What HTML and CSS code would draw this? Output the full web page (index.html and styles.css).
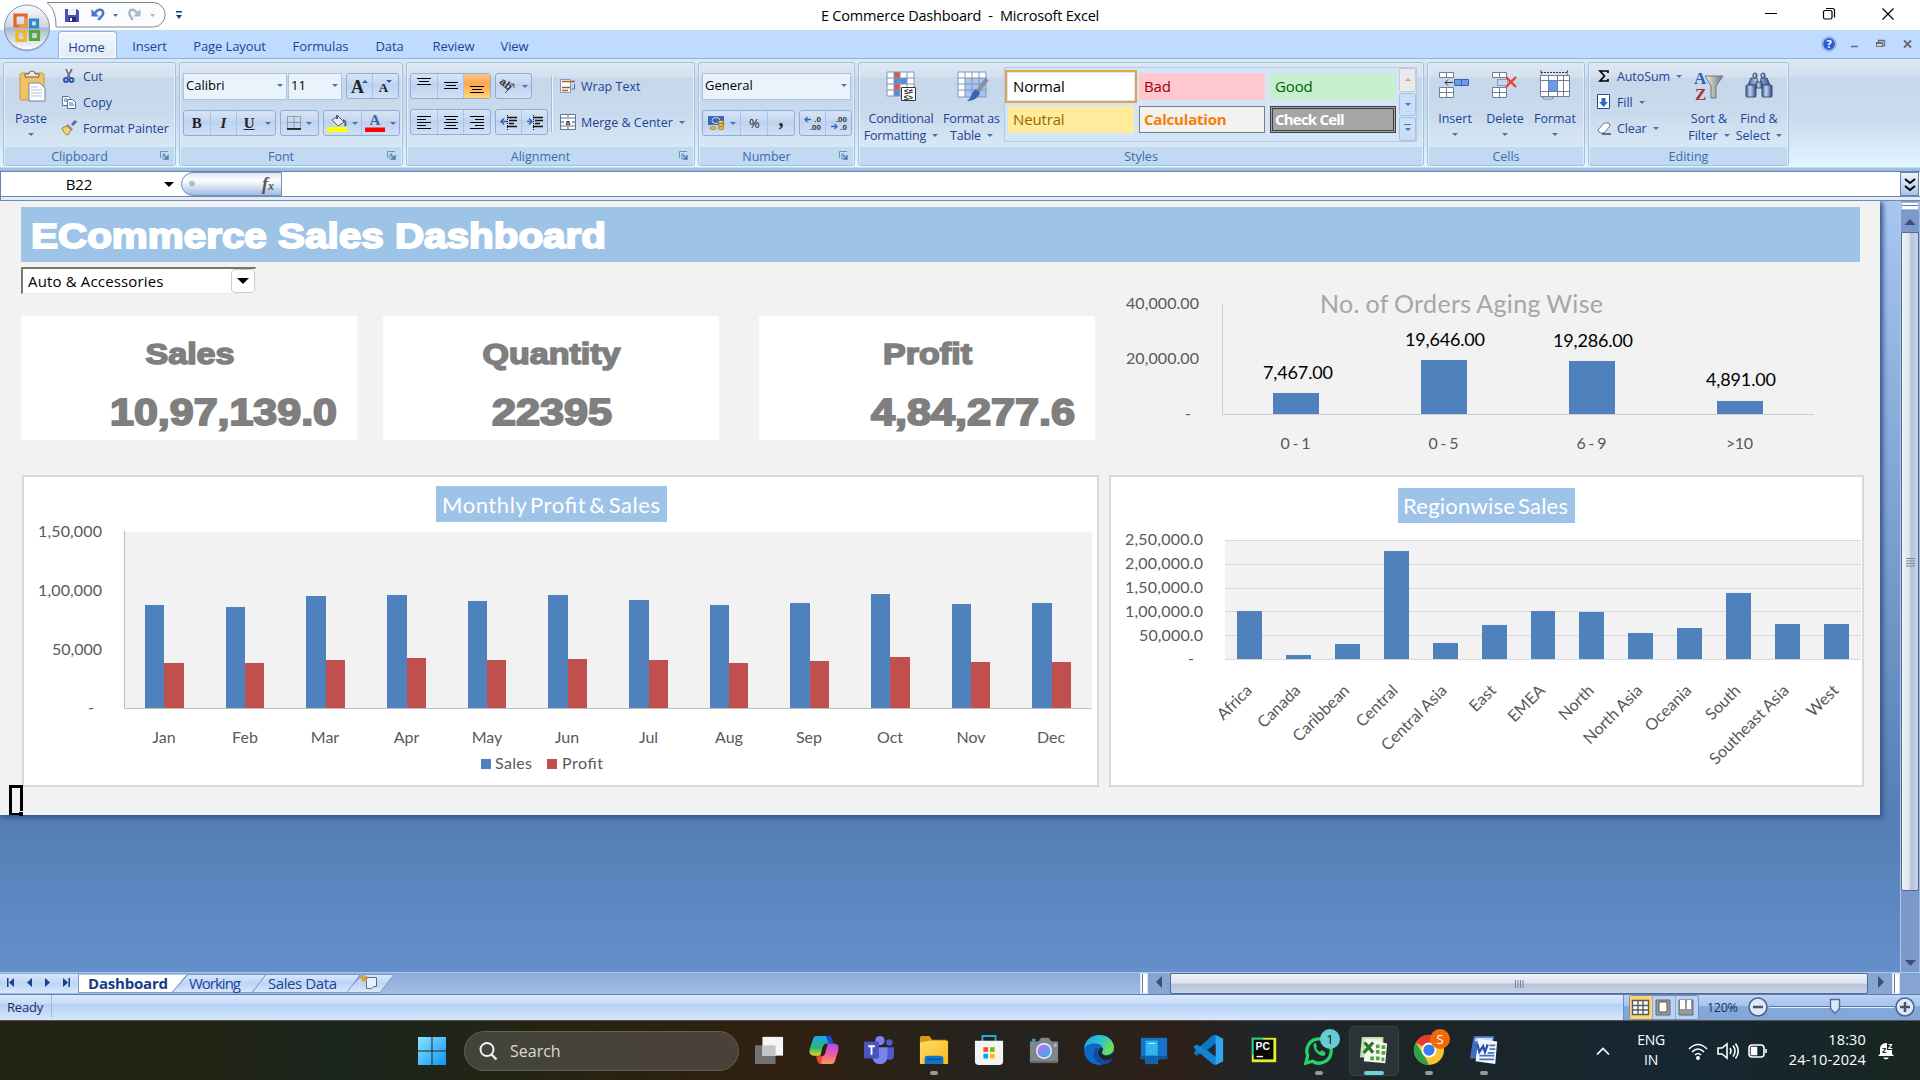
FILE: index.html
```html
<!DOCTYPE html>
<html lang="en">
<head>
<meta charset="utf-8">
<title>E Commerce Dashboard - Microsoft Excel</title>
<link rel="stylesheet" href="styles.css">
</head>
<body>
<svg class="defs" width="0" height="0">
  <defs>
    <linearGradient id="orb" x1="0" y1="0" x2="0" y2="1"><stop offset="0" stop-color="#fbfcfd"/><stop offset=".48" stop-color="#cdd6e2"/><stop offset=".52" stop-color="#a9b9cf"/><stop offset="1" stop-color="#fff"/></linearGradient>
    <linearGradient id="win" x1="0" y1="0" x2="1" y2="1"><stop offset="0" stop-color="#8ce3ff"/><stop offset="1" stop-color="#0a94f8"/></linearGradient>
    <linearGradient id="folder" x1="0" y1="0" x2="1" y2="1"><stop offset="0" stop-color="#ffdb6b"/><stop offset="1" stop-color="#fbbb18"/></linearGradient>
    <linearGradient id="copA" x1="0" y1="0" x2="0" y2="1"><stop offset="0" stop-color="#1aa5f5"/><stop offset=".6" stop-color="#2bb673"/><stop offset="1" stop-color="#e9d51c"/></linearGradient>
    <linearGradient id="copB" x1="0" y1="0" x2="0" y2="1"><stop offset="0" stop-color="#a24df0"/><stop offset=".6" stop-color="#f2609b"/><stop offset="1" stop-color="#fb9b4b"/></linearGradient>
    <linearGradient id="edgeA" x1="0" y1="0" x2="1" y2=".5"><stop offset="0" stop-color="#1b9de2"/><stop offset=".6" stop-color="#33c5c9"/><stop offset="1" stop-color="#6ee04f"/></linearGradient>
    <linearGradient id="metal" x1="0" y1="0" x2="1" y2="0"><stop offset="0" stop-color="#eee"/><stop offset="1" stop-color="#777"/></linearGradient>
    <linearGradient id="barrel" x1="0" y1="0" x2="1" y2="0"><stop offset="0" stop-color="#34598f"/><stop offset=".4" stop-color="#c6d7ee"/><stop offset="1" stop-color="#2b4b80"/></linearGradient>
    <linearGradient id="lens" x1="0" y1="0" x2="1" y2="1"><stop offset="0" stop-color="#c66af0"/><stop offset="1" stop-color="#28b5f0"/></linearGradient>
    <symbol id="launch" viewBox="0 0 10 9"><path d="M.5 7V.5H8M3 8.500V3h2" fill="none" stroke="#6b93bd"/><path d="M4 4l4 4M8 4v4H4" stroke="#4a77a8" fill="none" stroke-width="1.400"/></symbol>
    <symbol id="minus" viewBox="0 0 22 22"><circle cx="11" cy="11" r="9" fill="#dfe9f7" stroke="#44628f" stroke-width="1.500"/><path d="M6 11h10" stroke="#46566e" stroke-width="2.500"/></symbol>
    <symbol id="plus" viewBox="0 0 22 22"><circle cx="11" cy="11" r="9" fill="#dfe9f7" stroke="#44628f" stroke-width="1.500"/><path d="M6 11h10M11 6v10" stroke="#46566e" stroke-width="2.500"/></symbol>
  </defs>
</svg>

<header class="titlebar">
  <svg class="quick" width="190" height="30" viewBox="0 0 190 30">
    <path d="M47 2.500c6 5 9 12 9 24.500H154a12.300 12.300 0 0 0 0-24.500Z" fill="#fbfcfe" stroke="#84878c"/>
    <g><path d="M65 9h12l2 2v11H65z" fill="#4a50b8"/><path d="M68 9h8v6h-8z" fill="#eef3fb"/><path d="M69 17h7v5h-7z" fill="#26306c"/><path d="M70 18h2v3h-2z" fill="#fff"/></g>
    <path d="M91.500 9v7.500h7.500z" fill="#4779d1"/><path d="M95 13c3-5 9-4 8 1-.5 2.500-3 3-4.500 6" fill="none" stroke="#4779d1" stroke-width="2.600"/>
    <path d="M140.500 9v7.500H133z" fill="#a9b9cd"/><path d="M137 13c-3-5-8-4-7.500 1 .5 2.500 2 3 3 6" fill="none" stroke="#a9b9cd" stroke-width="2.600"/>
    <path d="M113 14h5l-2.500 3z" fill="#4472b0"/><path d="M150 14h5l-2.500 3z" fill="#b5b5b5"/>
    <path d="M176 11h6v1.500h-6zM176 15h6l-3 4z" fill="#1b3f82"/>
  </svg>
  <h1>E Commerce Dashboard&nbsp; -&nbsp; Microsoft Excel</h1>
  <svg class="winbtns" width="160" height="30" viewBox="1760 0 160 30" fill="none" stroke="#000" stroke-width="1.200"><path d="M1765 13.500h12M1882.500 8.500l11 11M1893.500 8.500l-11 11"/><rect x="1823.500" y="10.500" width="8.500" height="8.500" rx="1.500"/><path d="M1826 8.500h6.500a2 2 0 0 1 2 2v7"/></svg>
</header>

<nav class="tabs">
  <a class="tab home">Home</a><a class="tab t64">Insert</a><a class="tab t96">Page Layout</a><a class="tab t86">Formulas</a><a class="tab t52">Data</a><a class="tab t76">Review</a><a class="tab t46">View</a>
  <svg class="mdibtns" width="100" height="28" viewBox="1820 30 100 28"><circle cx="1829" cy="44" r="6.500" fill="#2a62d6" stroke="#fff"/><circle cx="1829" cy="44" r="7" fill="none" stroke="#6d97dc"/><text x="1829" y="48" text-anchor="middle" class="help">?</text><path d="M1851 46.500h7M1882.500 45.500h2v-5h-6v2" stroke="#6d6d6d" stroke-width="1.300" fill="none"/><path d="M1876.500 42.500h6v4h-6z" stroke="#6d6d6d" fill="none"/><path d="M1876 43h7" stroke="#6d6d6d" stroke-width="2"/><path d="M1904 40.500l7 7M1911 40.500l-7 7" stroke="#6d6d6d" stroke-width="2"/></svg>
</nav>

<svg class="office" width="54" height="54" viewBox="0 0 54 54"><circle cx="27" cy="28.500" r="23" fill="#8797ac" opacity=".5"/><circle cx="27" cy="27.500" r="22.500" fill="url(#orb)" stroke="#8796ac"/><g fill="none" stroke-width="3.200"><path d="M15 26V15h11v11z" stroke="#e4622b"/><path d="M26 18v8h-7" stroke="#f39a3a"/><path d="M30.500 20h7v7h-7z" stroke="#2f87ca"/><path d="M17 31.500h8v9h-8z" stroke="#f5b51d"/><path d="M30.500 31.500h8v8h-8z" stroke="#58a53c"/></g></svg>

<section class="ribbon">
  <div class="group g-clip">
    <div class="body">
      <div class="big w50"><svg width="30" height="32" viewBox="0 0 30 32"><rect x="3" y="3" width="24" height="27" rx="2" fill="#f3c065" stroke="#c99a45"/><path d="M8 7V4h4a3 3 0 0 1 6 0h4v3z" fill="#e8e8e8" stroke="#666"/><path d="M12 13h11l5 5v13H12z" fill="#fff" stroke="#6b86ae"/><path d="M14 17h7M14 20h11M14 23h11M14 26h11" stroke="#b4c3da"/></svg><span>Paste</span><i class="dd"></i></div>
      <div class="list">
        <div><svg width="16" height="16" viewBox="0 0 16 16"><path d="M5 1l4 9M11 1L6 10" stroke="#5f6b7c" stroke-width="1.600"/><g fill="none" stroke="#2f5aa8" stroke-width="2"><circle cx="5" cy="12" r="2"/><circle cx="10.500" cy="12" r="2"/></g></svg>Cut</div>
        <div><svg width="16" height="16" viewBox="0 0 16 16" fill="#fff" stroke="#4a69a8"><path d="M1.500 2.500h6l2 2v7h-8z"/><path d="M6.500 5.500h5l3 3v6h-8z"/><path d="M3 5h3M3 7h3M8 9h4M8 11h5"/></svg>Copy</div>
        <div><svg width="16" height="16" viewBox="0 0 16 16"><path d="M11 5l4-4" stroke="#5d6aa8" stroke-width="3"/><path d="M7 4l5 5-2 2-5-5z" fill="#8c96a8"/><path d="M1 8l5-2 4 4-3 5c-3-1-5-3-6-7z" fill="#f1d37a" stroke="#a5813b"/></svg>Format Painter</div>
      </div>
    </div>
    <footer class="with-launch">Clipboard<svg class="lnch"><use href="#launch"/></svg></footer>
  </div>

  <div class="group g-font">
    <div class="body col">
      <div class="row"><div class="combo c104">Calibri<i class="dd"></i></div><div class="combo c54">11<i class="dd"></i></div>
        <div class="btns w52 ml4"><b class="serif s20a">A<i class="dd up blue"></i></b><b class="serif s16a">A<i class="dd blue"></i></b></div></div>
      <div class="row"><div class="btns w92"><b class="serif">B</b><b class="serif"><em>I</em></b><b class="serif under"><u>U</u><i class="dd"></i></b></div>
        <div class="btns w39"><b><svg width="14" height="14" viewBox="0 0 14 14"><path d="M.5.500h13v12H.5zM7 .5v12M.5 6.500h13" fill="none" stroke="#5c6672" stroke-dasharray="1 1"/><path d="M0 13h14" stroke="#000" stroke-width="1.500"/></svg><i class="dd"></i></b></div>
        <div class="btns w76"><b><svg width="20" height="18" viewBox="0 0 20 18"><path d="M5 6l6-4 6 6-6 4z" fill="#e8ecf2" stroke="#525d6d"/><path d="M10 5V1M16 6c3 1 3 4 2 6" stroke="#40689f" fill="none" stroke-width="2"/><path d="M0 13h20v5H0z" fill="#ff0"/></svg><i class="dd"></i></b><b><svg width="20" height="18" viewBox="0 0 20 18"><text x="10" y="11" text-anchor="middle" class="fontA">A</text><path d="M0 13.500h20v4.500H0z" fill="#f00"/></svg><i class="dd"></i></b></div></div>
    </div>
    <footer class="with-launch">Font<svg class="lnch"><use href="#launch"/></svg></footer>
  </div>

  <div class="group g-align">
    <div class="body">
      <div class="col al">
        <div class="row"><div class="btns w80"><b><svg width="16" height="20"><path d="M1 2.500h14M3 5.500h10M1 8.500h14" stroke="#000" stroke-width="1.200"/></svg></b><b><svg width="16" height="20"><path d="M1 6.500h14M3 9.500h10M1 12.500h14" stroke="#000" stroke-width="1.200"/></svg></b><b class="on"><svg width="16" height="20"><path d="M1 10.500h14M3 13.500h10M1 16.500h14" stroke="#000" stroke-width="1.200"/></svg></b></div>
          <div class="btns w37"><b><svg width="18" height="18" viewBox="0 0 18 18"><text x="0" y="11" transform="rotate(40 7 8)" class="ab">ab</text><path d="M6 16L15 7M15 11V7h-4" stroke="#555" fill="none"/></svg><i class="dd"></i></b></div></div>
        <div class="row"><div class="btns w80"><b><svg width="16" height="14"><path d="M1 1.500h14M1 4.500h9M1 7.500h14M1 10.500h9M1 13.500h14" stroke="#000"/></svg></b><b><svg width="16" height="14"><path d="M1 1.500h14M3 4.500h10M1 7.500h14M3 10.500h10M1 13.500h14" stroke="#000"/></svg></b><b><svg width="16" height="14"><path d="M1 1.500h14M6 4.500h9M1 7.500h14M6 10.500h9M1 13.500h14" stroke="#000"/></svg></b></div>
          <div class="btns w52"><b><svg width="16" height="15"><path d="M6 2.500h10M8 5.500h8M8 8.500h5M6 11.500h10" stroke="#111" stroke-width="1.600"/><path d="M6.500 0v15" stroke="#111" stroke-dasharray="1 1"/><path d="M0 6.500h6M3 3.500l-3 3 3 3" stroke="#3763c0" fill="none" stroke-width="1.500"/></svg></b><b><svg width="16" height="15"><path d="M6 2.500h10M8 5.500h8M8 8.500h5M6 11.500h10" stroke="#111" stroke-width="1.600"/><path d="M6.500 0v15" stroke="#111" stroke-dasharray="1 1"/><path d="M0 6.500h5M2 3.500l3 3-3 3" stroke="#3763c0" fill="none" stroke-width="1.500"/></svg></b></div></div>
      </div>
      <div class="wrap">
        <div><svg width="16" height="16" viewBox="0 0 16 16"><path d="M.5 1.500h10v13H.5z" fill="#fff" stroke="#8497b5"/><path d="M2 3.500h13M2 9.500h8M2 12.500h6" stroke="#a5612b" stroke-width="1.500"/><path d="M14.500 6v5h-3" stroke="#4f74a8" fill="none"/></svg>Wrap Text</div>
        <div><svg width="16" height="16" viewBox="0 0 16 16"><path d="M.5.500h15v15H.5zM8 0v4M8 12v4M0 4h16M0 12h16" fill="#fff" stroke="#5d7599"/><text x="8" y="11" text-anchor="middle" class="mini">a</text><path d="M1 8h3M12 8h3" stroke="#1d4690"/></svg>Merge &amp; Center<i class="dd"></i></div>
      </div>
    </div>
    <footer class="with-launch">Alignment<svg class="lnch"><use href="#launch"/></svg></footer>
  </div>

  <div class="group g-num">
    <div class="body col">
      <div class="row"><div class="combo c148">General<i class="dd"></i></div></div>
      <div class="row"><div class="btns w92"><b class="f14"><svg width="17" height="16" viewBox="0 0 17 16"><path d="M0 1h16v9H0z" fill="#3c66b8"/><ellipse cx="8" cy="5.500" rx="4" ry="3" fill="none" stroke="#c9daf5"/><g fill="#f4c54c" stroke="#8d6510" stroke-width=".7"><ellipse cx="13" cy="7" rx="3" ry="1.500"/><ellipse cx="13" cy="10" rx="3" ry="1.500"/><ellipse cx="13" cy="13" rx="3" ry="1.500"/><ellipse cx="5" cy="13" rx="3" ry="1.500"/></g></svg><i class="dd"></i></b><b class="pct">%</b><b class="serif s20">,</b></div>
        <div class="btns w52"><b class="dec"><svg width="18" height="16" viewBox="0 0 18 16"><text x="17" y="7" text-anchor="end">.0</text><text x="17" y="15" text-anchor="end">.00</text><path d="M1 4.500h6M3.500 2l-2.500 2.500L3.500 7" stroke="#3763c0" fill="none" stroke-width="1.300"/></svg></b><b class="dec"><svg width="18" height="16" viewBox="0 0 18 16"><text x="17" y="7" text-anchor="end">.00</text><text x="17" y="15" text-anchor="end">.0</text><path d="M1 11.500h6M4.500 9l2.500 2.500L4.500 14" stroke="#3763c0" fill="none" stroke-width="1.300"/></svg></b></div></div>
    </div>
    <footer class="with-launch">Number<svg class="lnch"><use href="#launch"/></svg></footer>
  </div>

  <div class="group g-style">
    <div class="body">
      <div class="big w84"><svg width="32" height="32" viewBox="0 0 32 32"><path d="M2 2h27v24H2z" fill="#fff"/><path d="M9 2h6v24H9z" fill="#e9543c"/><path d="M9 8h13v6H9z" fill="#5b87e0"/><path d="M9 20h6v6H9z" fill="#5b87e0"/><path d="M2 2h27v24H2zM2 8h27M2 14h27M2 20h27M9 2v24M15 2v24M22 2v24" fill="none" stroke="#7f96b8"/><path d="M16.500 17.500h14v13h-14z" fill="#fff" stroke="#333"/><text x="23.500" y="24" text-anchor="middle" class="mini">≤≠</text><text x="23.500" y="30" text-anchor="middle" class="mini">≤&gt;</text></svg><span>Conditional<br>Formatting <i class="dd in"></i></span></div>
      <div class="big w58"><svg width="32" height="32" viewBox="0 0 32 32"><path d="M2 2h28v25H2z" fill="#fff"/><path d="M9 8h21v19H9z" fill="#a8c4f3"/><path d="M2 2h28v25H2zM2 8h28M2 14h28M2 20h28M9 2v25M16 2v25M23 2v25" fill="none" stroke="#7f96b8"/><path d="M31 9L22 21" stroke="#8a8f98" stroke-width="4"/><path d="M20 19l4 4c-3 6-7 8-13 8 5-3 4-9 9-12z" fill="#3766b5"/></svg><span>Format as<br>Table <i class="dd in"></i></span></div>
      <div class="gallery">
        <div class="cells"><span class="normal">Normal</span><span class="bad">Bad</span><span class="good">Good</span><span class="neutral">Neutral</span><span class="calc">Calculation</span><span class="check">Check Cell</span></div>
        <div class="scroll"><b class="off"><i class="dd up"></i></b><b><i class="dd"></i></b><b class="more"><i class="dd"></i></b></div>
      </div>
    </div>
    <footer>Styles</footer>
  </div>

  <div class="group g-cells">
    <div class="body">
      <div class="big w50"><svg width="32" height="32" viewBox="0 0 32 32"><path d="M.5 2.500h14v5H.5zM7.500 2.500v5M.5 17.500h14v10H.5zM.5 22.500h14M7.500 17.500v10" fill="#fff" stroke="#6f7f98"/><path d="M15.500 9.500h14v6h-14zM22.500 9.500v6" fill="#6c9bee" stroke="#3d62ac"/><path d="M6 12.500h8M9 9.500l-3 3 3 3" fill="none" stroke="#333"/></svg><span>Insert</span><i class="dd"></i></div>
      <div class="big w50"><svg width="32" height="32" viewBox="0 0 32 32"><path d="M3.500 2.500h14v5h-14zM10.500 2.500v5M3.500 17.500h14v10h-14zM3.500 22.500h14M10.500 17.500v10" fill="#fff" stroke="#6f7f98"/><path d="M8.500 9.500h10v6h-10z" fill="none" stroke="#3d62ac" stroke-dasharray="1 1"/><path d="M17 7l10 10M27 7L17 17" stroke="#f0402a" stroke-width="2.400"/></svg><span>Delete</span><i class="dd"></i></div>
      <div class="big w50"><svg width="32" height="32" viewBox="0 0 32 32"><path d="M1.500 5.500h29v21h-29zM1.500 10.500h29M1.500 21.500h29M9.500 5.500v21M18.500 5.500v21M24.500 5.500v21" fill="#fff" stroke="#6f7f98"/><path d="M10 11h8v10h-8z" fill="#6c9bee"/><path d="M2 2.500h27M2 .5v4M28.500.500v4" stroke="#333" fill="none" stroke-dasharray="2 1"/><path d="M3 27h12l-2 2H5z" fill="#fff" stroke="#6f7f98"/></svg><span>Format</span><i class="dd"></i></div>
    </div>
    <footer>Cells</footer>
  </div>

  <div class="group g-edit">
    <div class="body">
      <div class="list">
        <div><svg width="14" height="16" viewBox="0 0 14 16"><path d="M11 5V3H3l4.500 5L3 13h8v-2" fill="none" stroke="#000" stroke-width="1.700"/></svg>AutoSum<i class="dd"></i></div>
        <div><svg width="14" height="16" viewBox="0 0 14 16"><path d="M.5.500h12v14H.5z" fill="#fff" stroke="#234a96"/><path d="M4.500 4h4v4h2.500l-4.500 5L2 8h2.500z" fill="#2f69cc"/></svg>Fill<i class="dd"></i></div>
        <div><svg width="14" height="16" viewBox="0 0 14 16"><path d="M1 10l6-7h5l1 3-6 7H3z" fill="#fff" stroke="#66789a"/><path d="M5 14h9" stroke="#000"/></svg>Clear<i class="dd"></i></div>
      </div>
      <div class="big w50"><svg width="32" height="32" viewBox="0 0 32 32"><text x="1" y="14" class="az a">A</text><text x="2" y="30" class="az z">Z</text><path d="M12 6h18l-7 10v12h-5V16z" fill="url(#metal)" stroke="#777"/></svg><span>Sort &amp;<br>Filter <i class="dd in"></i></span></div>
      <div class="big w50"><svg width="32" height="32" viewBox="0 0 32 32" fill="url(#barrel)" stroke="#34507f"><rect x="10" y="3" width="4" height="5" rx="2"/><rect x="18" y="3" width="4" height="5" rx="2"/><path d="M8 8h6l1 7H5zM18 8h6l3 7H17z"/><rect x="3" y="15" width="10" height="12" rx="1"/><rect x="19" y="15" width="10" height="12" rx="1"/><rect x="13" y="12" width="6" height="6"/></svg><span>Find &amp;<br>Select <i class="dd in"></i></span></div>
    </div>
    <footer>Editing</footer>
  </div>
</section>

<section class="formula">
  <div class="namebox"><span>B22</span><i class="dd black"></i></div>
  <div class="fx"><i class="knob"></i><em>f<small>x</small></em></div>
  <div class="input"></div>
  <div class="expand"><svg width="18" height="24"><path d="M4 6l5 4 5-4M4 13l5 4 5-4" fill="none" stroke="#000" stroke-width="2"/></svg></div>
</section>

<main class="workspace">
  <div class="sheet">
    <h2 class="banner"><svg width="620" height="55" viewBox="21 207 620 55"><text x="31" y="247.500" textLength="575" lengthAdjust="spacingAndGlyphs" class="heavy title">ECommerce Sales Dashboard</text></svg></h2>
    <div class="upper">
      <div class="left">
        <div class="picker"><span>Auto &amp; Accessories</span><b><i></i></b></div>
        <div class="kpis">
          <svg class="kpi" width="336" height="124" viewBox="21 316 336 124"><text x="145.500" y="364" textLength="89" lengthAdjust="spacingAndGlyphs" class="heavy label">Sales</text><text x="110" y="424.500" textLength="227" lengthAdjust="spacingAndGlyphs" class="heavy num">10,97,139.0</text></svg>
          <svg class="kpi" width="336" height="124" viewBox="383 316 336 124"><text x="482.500" y="364" textLength="138" lengthAdjust="spacingAndGlyphs" class="heavy label">Quantity</text><text x="492" y="424.500" textLength="120" lengthAdjust="spacingAndGlyphs" class="heavy num">22395</text></svg>
          <svg class="kpi last" width="336" height="124" viewBox="759 316 336 124"><text x="883" y="364" textLength="89" lengthAdjust="spacingAndGlyphs" class="heavy label">Profit</text><text x="871" y="424.500" textLength="204" lengthAdjust="spacingAndGlyphs" class="heavy num">4,84,277.6</text></svg>
        </div>
      </div>
      <svg class="chart" width="750" height="190" viewBox="1110 277 750 190">
        <text x="1320" y="313" textLength="283" class="ct gray">No. of Orders Aging Wise</text>
        <path d="M1222.500 303v111.500H1814" fill="none" stroke="#cfcfcf"/>
        <g class="ax end"><text x="1199" y="309" textLength="73">40,000.00</text><text x="1199" y="364" textLength="73">20,000.00</text><text x="1191" y="419">-</text></g>
        <g fill="#4f81bd"><path d="M1273 393h46v21h-46zM1421 360h46v54h-46zM1569 361h46v53h-46zM1717 401h46v13h-46z"/></g>
        <g class="dl mid"><text x="1298" y="379" textLength="70">7,467.00</text><text x="1445" y="346" textLength="80">19,646.00</text><text x="1593" y="347" textLength="80">19,286.00</text><text x="1741" y="386" textLength="70">4,891.00</text></g>
        <g class="ax mid"><text x="1295.500" y="449" textLength="30">0 - 1</text><text x="1443.500" y="449" textLength="30">0 - 5</text><text x="1591.500" y="449" textLength="30">6 - 9</text><text x="1739.500" y="449" textLength="27">&gt;10</text></g>
      </svg>
    </div>
    <div class="lower">
      <svg class="frame" width="1077" height="312" viewBox="22 475 1077 312">
        <rect x="23" y="476" width="1075" height="310" fill="#fff" stroke="#d9d9d9" stroke-width="2"/>
        <rect x="436" y="486" width="231" height="36" fill="#9dc3e6"/><text x="442" y="513" textLength="218" class="ct small">Monthly Profit &amp; Sales</text>
        <rect x="125" y="532" width="967" height="176" fill="#f2f2f2"/>
        <g class="ax end"><text x="102" y="537" textLength="64">1,50,000</text><text x="102" y="596" textLength="64">1,00,000</text><text x="102" y="655" textLength="50">50,000</text><text x="94" y="713">-</text></g>
        <path fill="#4f81bd" d="M145 605h19v103h-19zM226 607h19v101h-19zM306 596h20v112h-20zM387 595h20v113h-20zM468 601h19v107h-19zM548 595h20v113h-20zM629 600h20v108h-20zM710 605h19v103h-19zM790 603h20v105h-20zM871 594h19v114h-19zM952 604h19v104h-19zM1032 603h20v105h-20z"/>
        <path fill="#c0504d" d="M164 663h20v45h-20zM245 663h19v45h-19zM326 660h19v48h-19zM407 658h19v50h-19zM487 660h19v48h-19zM568 659h19v49h-19zM649 660h19v48h-19zM729 663h19v45h-19zM810 661h19v47h-19zM890 657h20v51h-20zM971 662h19v46h-19zM1052 662h19v46h-19z"/>
        <path d="M124.500 531v177.500H1092" fill="none" stroke="#bfbfbf"/>
        <g class="ax mid"><text x="164" y="743">Jan</text><text x="245" y="743">Feb</text><text x="325" y="743">Mar</text><text x="406.500" y="743">Apr</text><text x="487" y="743">May</text><text x="567" y="743">Jun</text><text x="648.500" y="743">Jul</text><text x="729" y="743">Aug</text><text x="809" y="743">Sep</text><text x="890" y="743">Oct</text><text x="971" y="743">Nov</text><text x="1051" y="743">Dec</text></g>
        <rect x="481" y="759" width="10" height="10" fill="#4f81bd"/><rect x="547" y="759" width="10" height="10" fill="#c0504d"/>
        <g class="ax"><text x="495" y="769" textLength="37">Sales</text><text x="562" y="769" textLength="41">Profit</text></g>
      </svg>
      <svg class="frame" width="755" height="312" viewBox="1109 475 755 312">
        <rect x="1110" y="476" width="753" height="310" fill="#fff" stroke="#d9d9d9" stroke-width="2"/>
        <rect x="1398" y="488" width="177" height="35" fill="#9dc3e6"/><text x="1403" y="514" textLength="165" class="ct small">Regionwise Sales</text>
        <rect x="1225" y="540" width="636" height="119" fill="#f2f2f2"/>
        <path d="M1225 540.500h636M1225 564.500h636M1225 588.500h636M1225 611.500h636M1225 635.500h636M1225 659.500h636" stroke="#d9d9d9"/>
        <g class="ax end"><text x="1203" y="545" textLength="78">2,50,000.0</text><text x="1203" y="569" textLength="78">2,00,000.0</text><text x="1203" y="593" textLength="78">1,50,000.0</text><text x="1203" y="617" textLength="78">1,00,000.0</text><text x="1203" y="641" textLength="64">50,000.0</text><text x="1194" y="664">-</text></g>
        <path fill="#4f81bd" d="M1237 611h25v48h-25zM1286 655h25v4h-25zM1335 644h25v15h-25zM1384 551h25v108h-25zM1433 643h25v16h-25zM1482 625h25v34h-25zM1531 611h24v48h-24zM1579 612h25v47h-25zM1628 633h25v26h-25zM1677 628h25v31h-25zM1726 593h25v66h-25zM1775 624h25v35h-25zM1824 624h25v35h-25z"/>
        <g class="ax end tilt"><text transform="translate(1253 691.500) rotate(-45)">Africa</text><text transform="translate(1301.500 691.500) rotate(-45)">Canada</text><text transform="translate(1350.500 691.500) rotate(-45)">Caribbean</text><text transform="translate(1399 691.500) rotate(-45)">Central</text><text transform="translate(1448 691.500) rotate(-45)">Central Asia</text><text transform="translate(1497 691.500) rotate(-45)">East</text><text transform="translate(1546 691.500) rotate(-45)">EMEA</text><text transform="translate(1595 691.500) rotate(-45)">North</text><text transform="translate(1643.500 691.500) rotate(-45)">North Asia</text><text transform="translate(1692.500 691.500) rotate(-45)">Oceania</text><text transform="translate(1741.500 691.500) rotate(-45)">South</text><text transform="translate(1790 691.500) rotate(-45)">Southeast Asia</text><text transform="translate(1839.500 691.500) rotate(-45)">West</text></g>
      </svg>
    </div>
    <i class="cursor"></i>
  </div>
  <div class="vscroll"><i class="split"></i><i class="arr"><svg width="18" height="22"><path d="M3.500 15h11L9 9z" fill="#3f4c73"/></svg></i><i class="thumb"><svg width="9" height="8"><path d="M0 .5h9M0 3h9M0 5.500h9M0 8h9" stroke="#7787a2"/></svg></i><i class="track"></i><i class="arr"><svg width="18" height="22"><path d="M4 11h11l-5.500 6z" fill="#3f4c73"/></svg></i></div>
</main>

<section class="sheettabs">
  <svg width="400" height="22" viewBox="0 972 400 22">
    <defs><linearGradient id="tabg" x1="0" y1="0" x2="0" y2="1"><stop offset="0" stop-color="#d8e7fa"/><stop offset=".5" stop-color="#bdd5f5"/><stop offset="1" stop-color="#d8e8fb"/></linearGradient></defs>
    <path d="M0 973h79v19H0z" fill="url(#tabg)"/>
    <g stroke="#7c9ccb" fill="url(#tabg)"><path d="M344 991.500l20-18h30l-14 18z"/><path d="M252 991.500l14-18h94l-13 18z"/><path d="M172 991.500l16-18h78l-14 18z"/></g>
    <path d="M78.500 973v18.500H172l15.500-18.500z" fill="#fff" stroke="#7c9ccb"/>
    <path d="M7 977h1.500v9H7zM14 977v9l-5-4.500zM32 977v9l-5-4.500zM45 977v9l5-4.500zM63 977v9l5-4.500zM68.500 977H70v9h-1.500z" fill="#174190"/>
    <g class="st"><text x="88" y="988" textLength="80" class="bold">Dashboard</text><text x="189" y="988" textLength="52">Working</text><text x="268" y="988" textLength="69">Sales Data</text></g>
    <path d="M366.500 976.500h10v9h-3l-2 2h-5z" fill="#e9eef8" stroke="#5a6b92"/><path d="M364 974v7M360.500 977.500h7M361.500 975l5 5M366.500 975l-5 5" stroke="#e29a28" stroke-width="1.300"/>
  </svg>
  <div class="hscroll"><i class="split h"></i><i class="arr h"><svg width="22" height="19"><path d="M14 3v12L8 9z" fill="#3f4c73"/></svg></i><i class="thumb h"><svg width="8" height="8"><path d="M.5 0v8M3 0v8M5.500 0v8M8 0v8" stroke="#7787a2"/></svg></i><i class="arr h"><svg width="24" height="19"><path d="M10 3v12l6-6z" fill="#3f4c73"/></svg></i><i class="split h"></i></div>
</section>

<footer class="status">
  <span class="ready">Ready</span>
  <div class="zoom">
    <svg class="views" width="70" height="25" viewBox="0 0 70 25"><rect x=".5" y=".5" width="69" height="24" rx="2" fill="#bcd2f2" stroke="#7291be"/><path d="M1 1h22v23H1z" fill="#ffd36b"/><path d="M23.500 1v23M46.500 1v23" stroke="#8eabd4"/><path d="M3.500 5.500h16v14h-16zM3.500 10.500h16M3.500 15h16M9 5.500v14M14 5.500v14" fill="#fff" stroke="#565b61" stroke-width="1.400"/><path d="M27 5h14v15H27z" fill="#999" stroke="#66696e"/><path d="M30 7h8v10h-8z" fill="#fff" stroke="#555"/><path d="M50 5h14v15H50z" fill="#999" stroke="#66696e"/><path d="M51 5h5v9h-5zM58 5h4v9h-4z" fill="#fff"/></svg>
    <span class="pc">120%</span>
    <svg width="22" height="22"><use href="#minus"/></svg>
    <svg width="125" height="22"><path d="M0 10.500h125" stroke="#5577ab"/><path d="M0 11.500h125" stroke="#e6effc"/><path d="M61.500 3.500h9v9l-4.500 5-4.500-5z" fill="#dce8f8" stroke="#4e6c9c" stroke-width="1.400"/></svg>
    <svg width="22" height="22"><use href="#plus"/></svg>
  </div>
</footer>

<footer class="taskbar">
  <svg class="start" width="30" height="30"><path d="M1 1h13.500v13.500H1zM15.500 1H29v13.500H15.500zM1 15.500h13.500V29H1zM15.500 15.500H29V29H15.500z" fill="url(#win)"/></svg>
  <div class="search"><svg width="20" height="20"><circle cx="9" cy="8.500" r="6.500" fill="none" stroke="#f2f2f2" stroke-width="2"/><path d="M13.500 13.500l5 5" stroke="#f2f2f2" stroke-width="2.400"/></svg>Search</div>
  <div class="apps">
    <div><svg viewBox="0 0 32 32"><path d="M1 11h22v20H1z" fill="#717171"/><path d="M9 2h22v20H9z" fill="#f6f6f6"/><path d="M9 11h14v11H9z" fill="#c5c5c5"/></svg></div>
    <div><svg viewBox="0 0 32 32"><path d="M8 1h11c4 0 4 4 5 8h-4c-4 0-5 2-6 6l-2 7H6c-6 0-6-4-5-8l3-9c1-3 2-4 4-4z" fill="url(#copA)"/><path d="M18 1h4c2 0 3 3 4 8h-5z" fill="#1c4bcf"/><path d="M24 31H14c-4 0-5-3-6-8h4c4 0 5-2 6-6l2-8h6c6 0 6 4 5 8l-3 10c-1 3-2 4-4 4z" fill="url(#copB)"/><path d="M8 23h6l-1 8c-3 0-4-4-5-8z" fill="#f04b28"/></svg></div>
    <div><svg viewBox="0 0 32 32"><circle cx="17" cy="6" r="5" fill="#7b83eb"/><circle cx="27" cy="8" r="3.500" fill="#5059c9"/><path d="M23 13h9v9c0 6-9 6-9 0z" fill="#5059c9"/><path d="M9 13h16v10c0 11-16 11-16 0z" fill="#7b83eb"/><rect y="7" width="16" height="18" rx="1.500" fill="#4b53bc"/><path d="M4.500 12h7M8 12v9" stroke="#fff" stroke-width="2"/></svg></div>
    <div class="run"><svg viewBox="0 0 32 32"><path d="M1 3q0-2 2-2h8l3 4h15v5H1z" fill="#d99b0d"/><path d="M1 8l11-2h19v25H1z" fill="url(#folder)"/><path d="M6 31v-6q0-3 3-3h14q3 0 3 3v6z" fill="#0c75c8"/><path d="M9 26h14" stroke="#064d8f" stroke-width="1.500"/></svg></div>
    <div><svg viewBox="0 0 32 32"><path d="M9 7V1h14v6" fill="none" stroke="#23a8e8" stroke-width="2"/><path d="M1 6h30v22q0 4-4 4H5q-4 0-4-4z" fill="#f3f3f3"/><path d="M10 13h5v5h-5z" fill="#f25022"/><path d="M17 13h5v5h-5z" fill="#7fba00"/><path d="M10 20h5v5h-5z" fill="#00a4ef"/><path d="M17 20h5v5h-5z" fill="#ffb900"/></svg></div>
    <div><svg viewBox="0 0 32 32"><path d="M3 4h4v3H3z" fill="#1ba1e2"/><path d="M1 7h9l3-4h8l3 4h7v22H1z" fill="#7f868c"/><path d="M1 28h30v2H1z" fill="#5e656b"/><circle cx="16" cy="17" r="8.500" fill="#f1f1f1"/><circle cx="16" cy="17" r="7" fill="url(#lens)"/><path d="M26 11h4M28 9v4" stroke="#c4c8cc"/></svg></div>
    <div><svg viewBox="0 0 32 32"><circle cx="16" cy="16" r="16" fill="#0b69c7"/><path d="M0 15C1 5 8 0 16 0c10 0 16 7 16 13 0 7-7 9-10 8-4-1-3-3-2-5 1-4-3-7-8-7C6 9 1 11 0 15z" fill="url(#edgeA)"/><path d="M12 14c-5 8 1 18 11 17 3-1 6-3 7-6-4 2-15 3-15-7 0-3 1-3 2-4z" fill="#134a9b"/><path d="M15 18c0-3 3-5 5-4 1 3-4 6 3 8 4 0 6-1 9-4l1 6c-2 2-5 3-9 3s-9-4-9-9z" fill="#20232a"/><path d="M17 24c3 4 9 4 13 1-2 4-5 6-8 6-4 0-6-4-5-7z" fill="#134a9b"/></svg></div>
    <div><svg viewBox="0 0 32 32"><path d="M2 3h28v20H2z" fill="#1374ca"/><path d="M0 23h32l-3 3H3z" fill="#0b5aa0"/><path d="M7 6h13v25H7z" fill="#32b5ee"/><path d="M7 22h13v9H7z" fill="#1160aa"/><path d="M10 9h7" stroke="#d8f4ff"/></svg></div>
    <div><svg viewBox="0 0 32 32"><path d="M23 0l8 4v24l-8 4L8 18l-5 4-3-2v-2l20-18z" fill="#0a78c6"/><path d="M3 10l-3 2v2l20 17 3 1v-9z" fill="#1585d2"/><path d="M23 0l8 4v24l-8 4z" fill="#30a6f2"/><path d="M23 9v14l-9-7z" fill="#23262b"/></svg></div>
    <div><svg viewBox="0 0 32 32"><path d="M3 3h26v26H3z" fill="#dff028"/><path d="M3 3h12v18H3z" fill="#21d789"/><path d="M5 5h21v21H5z" fill="#050505"/><text x="7" y="16" class="pcm">PC</text><path d="M8 23h7" stroke="#fff" stroke-width="1.500"/></svg></div>
    <div class="run"><svg viewBox="0 0 32 32"><path d="M2 30l2-8a13 13 0 1 1 5 6z" fill="none" stroke="#25d366" stroke-width="3.500"/><path d="M10 10c0 8 7 13 12 12l1-3-4-3-2 2c-2-1-4-3-4-5l1-1-2-4z" fill="#25d366"/></svg><b class="badge teal">1</b></div>
    <div class="run active"><svg viewBox="0 0 32 32"><path d="M3 2h23v22H1z" fill="#bfe0ac"/><path d="M6 4h18v5H6z" fill="#e8f5df"/><path d="M8 5l22 4-2 21L5 28z" fill="#f4faef"/><path d="M18 10h4v4h-4zM24 11h4v4h-4zM18 16h4v4h-4zM24 17h4v4h-4zM12 23h4v4h-4zM18 23h4v4h-4zM24 24h3v4h-3z" fill="#5aa046"/><path d="M6 8l9 11M15 8L5 19" stroke="#26762b" stroke-width="3.400"/></svg></div>
    <div class="run"><svg viewBox="0 0 32 32"><circle cx="16" cy="16" r="16" fill="#f7c52a"/><path d="M16 16L2 8a16 16 0 0 1 28 0z" fill="#e33b2e"/><path d="M2 8l11 18 3 6A16 16 0 0 1 2 8z" fill="#2da14c"/><circle cx="16" cy="16" r="8" fill="#fff"/><circle cx="16" cy="16" r="6" fill="#3a7cec"/></svg><b class="badge org">S</b></div>
    <div class="run"><svg viewBox="0 0 32 32"><path d="M5 1h22l-4 24H1z" fill="#3d6cc0"/><path d="M7 3h18v4H6z" fill="#c9d9f3"/><path d="M10 4l20 3-2 24-21-3z" fill="#f2f6fd"/><path d="M9 10l2 8 4-6 2 6 3-8" fill="none" stroke="#2756ae" stroke-width="2.500"/><path d="M22 11h6M22 15h6M20 19h7M11 22h16M11 26h16" stroke="#4773bf" stroke-width="2"/></svg></div>
  </div>
  <div class="tray">
    <svg class="chev" width="16" height="12"><path d="M2 9.500l6-6 6 6" fill="none" stroke="#fff" stroke-width="1.700"/></svg>
    <div class="lang">ENG<br>IN</div>
    <svg class="ti" width="80" height="24" viewBox="0 0 80 24" fill="none" stroke="#fff" stroke-width="1.600"><path d="M1 10q9-9 18 0M4 13q6-6 12 0M7 16q3-3 6 0"/><circle cx="10" cy="19" r="1.200" fill="#fff"/><path d="M30 9h4l5-4v14l-5-4h-4zM42 9q2 3 0 6M45 6.500q4 5.500 0 11M47.500 4.500q5.500 7.500 0 15"/><rect x="61" y="6" width="15" height="12" rx="3"/><path d="M63.500 8.500h5v7h-5z" fill="#fff"/><path d="M78 10v4"/></svg>
    <div class="clock">18:30<br>24-10-2024</div>
    <svg class="bell" width="18" height="20"><path d="M1 15l2-2V7q1-5 7-5v7h5v4l2 2zM6 16.500h6q-3 4-6 0z" fill="#fff"/><text x="5" y="12" class="zz">z</text><text x="11" y="8" class="zz w">z</text></svg>
  </div>
</footer>
</body>
</html>
```
FILE: styles.css
```css
* { box-sizing: border-box; }
html, body { margin: 0; width: 1920px; height: 1080px; overflow: hidden; }
body { display: flex; flex-direction: column; position: relative; font: 12.5px "Open Sans", "Noto Sans", sans-serif; color: #1e4395; background: #fff; }
svg { display: block; flex: none; overflow: visible; }
.defs { position: absolute; }
i { font-style: normal; }
p, h1, h2 { margin: 0; }

/* title bar */
.titlebar { height: 30px; display: flex; justify-content: space-between; align-items: center; flex: none; }
.titlebar h1 { font: 14.500px "Open Sans", sans-serif; letter-spacing: -.2px; color: #000; }
.titlebar .quick { margin-right: -30px; }
.office { position: absolute; left: 0; top: 0; }

.tabs { height: 28px; background: #bfdbff; display: flex; padding-left: 58px; flex: none; font-size: 13px; letter-spacing: -.1px; }
.tab { display: flex; align-items: center; justify-content: center; padding: 4px 0 0 1px; }
.tab.home { width: 59px; margin-top: 1px; padding: 3px 2px 0 0; background: linear-gradient(#f3f8fe, #dfe9f4); border: 1px solid #8db2e3; border-bottom: 0; border-radius: 4px 4px 0 0; box-shadow: inset 0 0 2px 1px #fff; }
.t64 { width: 64px; } .t96 { width: 96px; } .t86 { width: 86px; } .t52 { width: 52px; } .t76 { width: 76px; } .t46 { width: 46px; }
.mdibtns { margin-left: auto; }
.help { font: bold 11px "Open Sans"; fill: #fff; }

/* ribbon */
.ribbon { height: 113px; flex: none; display: flex; gap: 3px; padding: 3px 3px 0; background: linear-gradient(#dce7f3 0, #d5e0ee 16px, #c7d8ed 18px, #cbdbee 60px, #e3f5ff 108px, #9fc3e0 109px, #9db5d2 113px); border-top: 1px solid #8db2e3; }
.group { height: 104px; border: 1px solid #a3c2df; border-radius: 3px; box-shadow: inset 0 0 0 1px #e3edf7; background: linear-gradient(#dee8f4 0, #d4e0ee 14px, #c7d7eb 15px, #c9daed 50px, #d8e8f6 85px); display: flex; flex-direction: column; }
.g-clip { width: 173px; } .g-font { width: 224px; } .g-align { width: 289px; } .g-num { width: 157px; } .g-style { width: 566px; } .g-cells { width: 158px; } .g-edit { width: 201px; }
.group > footer { height: 19px; background: #c1d9f1; color: #3e6aaa; display: flex; align-items: center; justify-content: center; position: relative; margin: 0 1px; }
.group > .with-launch { padding-right: 20px; }
.lnch { position: absolute; right: 4px; top: 4px; width: 10px; height: 9px; }
.body { height: 84px; display: flex; flex: none; }
.col { display: flex; flex-direction: column; }
.dd { width: 0; height: 0; border: 3px solid transparent; border-top-color: #4a74ad; border-bottom: 0; flex: none; display: block; }
.dd.in { display: inline-block; margin: 0 0 3px 3px; }
.dd.up { border: 3px solid transparent; border-bottom-color: #aaa; border-top: 0; }
.dd.black { border-width: 5px 5px 0; border-top-color: #000; }
.big { display: flex; flex-direction: column; align-items: center; text-align: center; padding-top: 7px; line-height: 17px; white-space: nowrap; }
.big svg { margin-bottom: 8px; }
.big > .dd { margin-top: 6px; }
.w50 { width: 50px; } .w84 { width: 84px; } .w58 { width: 57px; }
.g-clip .big { margin-left: 2px; }
.g-clip .big svg { margin-left: 2px; }
.list { margin: 0 0 0 5px; white-space: nowrap; letter-spacing: -.1px; }
.list > div { height: 26px; display: flex; align-items: center; gap: 6px; }
.g-style .body { letter-spacing: -.15px; }
.g-cells .body { padding-left: 2px; }
.g-edit .list { width: 87px; margin-left: 8px; }

.g-font .body, .g-num .body, .al { padding: 10px 0 0 3px; gap: 11px; }
.al { padding-top: 11px; gap: 10px; }
.row { display: flex; gap: 4px; height: 26px; }
.al .row { margin-top: -1px; }
.al .row + .row { margin-top: 0; }
.g-font .row:first-child { gap: 1px; }
.ml4 { margin-left: 3px; }
.combo { border: 1px solid #a9c3e0; background: #eaf2fb; color: #000; display: flex; justify-content: space-between; align-items: center; padding: 0 3px 3px 2px; height: 27px; font-size: 13px; }
.c104 { width: 104px; } .c54 { width: 54px; } .c148 { width: 149px; }
.btns { display: flex; height: 26px; border: 1px solid #8eaed9; border-radius: 3px; background: linear-gradient(#d7e4f5, #c5d8f1 40%, #bcd1ee 41%, #cfe1f6); }
.btns b { flex: 1; display: flex; align-items: center; justify-content: center; gap: 5px; border-left: 1px solid #a9c3e6; color: #222; font-weight: 400; }
.btns b:first-child { border-left: 0; }
.btns b.on { background: linear-gradient(#f9c78b, #fda64d 40%, #ffd777); }
.btns b.f14 { flex: 1.45; }
.w52 { width: 53px; } .w92 { width: 93px; } .w39 { width: 39px; } .w76 { width: 77px; } .w80 { width: 81px; } .w37 { width: 37px; }
.btns b.serif { font: bold 15px "Liberation Serif", serif; gap: 0; }
.btns b.under { flex: 1.4; gap: 10px; padding-left: 2px; }
.btns b.s20a { font-size: 18px; padding-top: 2px; } .btns b.s16a { font-size: 13px; padding-top: 3px; }
.dd.blue { margin: 0 0 12px -2px; border-top-color: #2f5aa8; }
.dd.up.blue { border-top-color: transparent; border-bottom-color: #2f5aa8; }
.btns b.s20 { font-size: 20px; padding-bottom: 8px; }
.pct { font-size: 13px; }
.fontA { font: bold 15px "Liberation Serif"; fill: #3b63a5; }
.ab { font: bold 11px "Liberation Sans"; fill: #333; }
.mini { font: bold 8px "Liberation Sans"; fill: #222; }
.dec text { font: bold 8px "Liberation Sans"; fill: #333; }
.g-align .al { width: 144px; }
.wrap { border-left: 1px solid #9dbbdb; box-shadow: inset 1px 0 #eef5fc; margin-top: 13px; height: 56px; padding-left: 8px; white-space: nowrap; }
.wrap > div { display: flex; align-items: center; gap: 5px; height: 20px; margin-bottom: 16px; }
.wrap .dd { margin-left: 1px; }

.gallery { margin: 4px 0 0 4px; display: flex; width: 413px; height: 75px; border: 1px solid #b0cae8; background: #d3e5f8; }
.cells { width: 395px; display: grid; grid-template: 27px 27px / 126px 126px 126px; padding: 5px 0 0 3px; row-gap: 6px; column-gap: 5px; font: 15px "Open Sans"; color: #000; }
.cells span { display: flex; align-items: center; padding: 0 5px 1px; }
.normal { background: #fff; outline: 2px solid #e1a44c; outline-offset: 1px; }
.bad { background: #ffc7ce; color: #9c0006; } .good { background: #c6efce; color: #006100; } .neutral { background: #ffeb9c; color: #9c6500; }
.cells .calc { background: #f2f2f2; color: #fa7d00; border: 1px solid #7f7f7f; font-weight: 700; letter-spacing: -.2px; padding-left: 4px; }
.cells .check { background: #a5a5a5; color: #fff; border: 3px double #3f3f3f; font-weight: 700; letter-spacing: -.8px; padding-left: 2px; }
.scroll { width: 17px; display: flex; flex-direction: column; gap: 1px; }
.scroll b { flex: 1; border: 1px solid #a6c1e2; background: #cadef6; display: flex; align-items: center; justify-content: center; border-radius: 2px; }
.scroll .off { background: #eaeaea; border-color: #ccc; }
.scroll .more { background: linear-gradient(#4a74ad, #4a74ad) 50% 6px / 7px 1px no-repeat #cadef6; }
.az { font: bold 17px "Liberation Serif"; } .a { fill: #2f5fae; } .z { fill: #a33338; }

/* formula bar */
.formula { height: 30px; flex: none; display: flex; border-top: 1px solid #6485b0; border-left: 1px solid #6485b0; background: #fff; border-bottom: 1px solid #6a8bb4; box-shadow: inset 0 -3px #e2ebf6, inset 0 -4px #6a8bb4; padding-bottom: 4px; color: #000; font-size: 15px; padding-right: 1px; }
.namebox { width: 180px; display: flex; align-items: center; }
.namebox span { width: 156px; text-align: center; letter-spacing: -.1px; padding-bottom: 1px; }
.namebox .dd { margin-left: 7px; }
.fx { width: 101px; border: 1px solid #7091bb; border-radius: 12px 0 0 12px; background: linear-gradient(#dfe8f3, #fff 35%, #9fbbe2); display: flex; align-items: center; justify-content: space-between; padding: 0 7px 0 6px; }
.knob { width: 8px; height: 8px; border-radius: 4px; background: #b4bcc7; border: 1px solid #edf1f6; }
.fx em { font: italic bold 18px "Liberation Serif"; color: #555; } .fx small { font-size: 12px; }
.input { flex: 1; }
.expand { width: 19px; border: 1px solid #6485b0; background: linear-gradient(#eef4fb, #a9c4e8); }

/* workspace */
.workspace { height: 771px; flex: none; position: relative; display: flex; justify-content: space-between; background: linear-gradient(#a8c6f0, #557eb5 620px, #648fca); overflow: hidden; }
.sheet { width: 1880px; height: 614px; background: #f2f2f2; padding: 6px 0 0 21px; box-shadow: 2px 2px 5px 1px #34568a; position: relative; }
.banner { width: 1839px; height: 55px; background: #9dc3e6; }
.heavy { font-family: "Liberation Sans", Arial, sans-serif; font-weight: 700; fill: #7f7f7f; stroke: #7f7f7f; stroke-linejoin: miter; stroke-width: 1.900px; }
.title { font-size: 35.500px; fill: #fff; stroke: #fff; }
.upper { display: flex; height: 212px; }
.left { width: 1089px; padding-top: 5px; flex: none; }
.picker { width: 235px; height: 27px; background: #fff; border: 2px solid #777; border-right: 1px solid #eee; border-bottom: 1px solid #eee; display: flex; justify-content: space-between; align-items: center; color: #000; font-size: 15px; padding-left: 5px; letter-spacing: .15px; }
.picker b { width: 24px; height: 24px; border: 1px solid #ccc; border-radius: 4px; display: flex; align-items: center; justify-content: center; }
.picker b i { border: 6px solid transparent; border-top-color: #000; border-bottom: 0; }
.kpis { display: flex; margin-top: 22px; }
.kpi { background: #fff; margin-right: 26px; }
.kpi.last { margin-left: 14px; margin-right: 0; }
.label { font-size: 29.500px; stroke-width: 1.600px; }
.num { font-size: 36.500px; }
.chart { margin-top: 15px; }
.chart text, .frame text { font-family: Lato, sans-serif; }
.ax { font-size: 16px; fill: #595959; } .dl { font-size: 18px; fill: #000; }
.end { text-anchor: end; } .mid { text-anchor: middle; }
.tilt { font-size: 16.200px; }
.ct { font-size: 22px; fill: #fff; word-spacing: -3px; } .ct.gray { font-size: 25px; fill: #a6a6a6; word-spacing: -1px; }
.lower { display: flex; gap: 10px; margin: 1px 0 0 1px; }
.cursor { position: absolute; left: 9px; top: 584px; width: 14px; height: 30px; border: 3px solid #000; border-bottom-width: 2px; }
.cursor::after { content: ""; position: absolute; right: -3px; bottom: -3px; width: 4px; height: 4px; background: #000; border-top: 1px solid #f2f2f2; box-sizing: content-box; }

.vscroll { width: 20px; background: #7b9acb; display: flex; flex-direction: column; border-left: 1px solid #b0c8ea; border-right: 1px solid #9db9e2; }
.vscroll .split { height: 8px; margin: 1px 0 0; background: linear-gradient(#fff 2px, #5c7ba5 2px, #5c7ba5 3px, #fff 3px); border: 1px solid #a3bbdd; }
.vscroll .arr { height: 22px; display: block; }
.thumb { background: linear-gradient(90deg, #f1f4f8, #dde4ee 45%, #b6c4da 55%, #c9d4e5); border: 1px solid #52698f; border-radius: 2px; display: flex; align-items: center; justify-content: center; }
.vscroll .thumb { height: 659px; }
.vscroll .track { height: 58px; }

.sheettabs { height: 22px; flex: none; background: linear-gradient(#8bacd8, #a2bce2); border-top: 1px solid #a9c7ed; display: flex; justify-content: space-between; }
.st text { font: 15px "Open Sans"; fill: #1e4395; } .st .bold { font-weight: 700; fill: #153c86; }
.hscroll { width: 780px; display: flex; background: #87a5d2; }
.hscroll .split { width: 8px; background: linear-gradient(90deg, #fff 1px, #5c7ba5 1px, #5c7ba5 2px, #fff 2px); border: 1px solid #d5e2f4; }
.hscroll .arr { width: 22px; } .hscroll .arr:nth-child(4) { width: 24px; }
.thumb.h { width: 698px; background: linear-gradient(#eff2f7, #dde4ee 45%, #b6c4da 55%, #c9d4e5); }

.status { height: 26px; flex: none; background: linear-gradient(#dae8fc, #c7dcf8 35%, #b1cff5 36%, #d7e6fa); border-top: 1px solid #5a7fb5; display: flex; justify-content: space-between; color: #1a2e63; font-size: 13px; }
.ready { width: 52px; height: 22px; padding: 3px 0 0 7px; line-height: 18px; border-right: 1px solid #9db9dc; letter-spacing: -.2px; }
.zoom { width: 297px; height: 25px; background: linear-gradient(#bdd4f5, #a5c3ed 45%, #85a9dd 46%, #83a5d6); border-left: 1px solid #6d8fc1; display: flex; align-items: center; padding-left: 5px; padding-bottom: 1px; }
.pc { width: 48px; padding-left: 8px; letter-spacing: -.3px; font-size: 12.500px; }

/* taskbar */
.taskbar { height: 60px; flex: none; display: flex; align-items: center; padding-left: 417px; border-top: 1px solid #555; background: linear-gradient(90deg, #242414 0, #242414 200px, #1b251e 330px, #242413 520px, #30200f 760px, #25231f 1000px, #2e2018 1170px, #20252a 1260px, #1d2526 1400px, #152733 1680px, #182520 1920px); color: #fff; }
.search { width: 275px; height: 40px; margin-left: 17px; border: 1px solid #625e50; border-radius: 20px; background: linear-gradient(90deg, #42443a, #4b4138); display: flex; align-items: center; padding-left: 13px; gap: 12px; font-size: 16px; color: #dadada; }
.apps { display: flex; margin-left: 5px; }
.apps > div { width: 50px; height: 50px; margin-right: 5px; border-radius: 5px; position: relative; display: flex; justify-content: center; padding-top: 9px; }
.apps svg { width: 30px; height: 30px; }
.run::after { content: ""; position: absolute; bottom: 1px; left: 21px; width: 8px; height: 4px; border-radius: 2px; background: #999; }
.active { background: #2b3336; outline: 1px solid #384043; outline-offset: -1px; }
.active::after { width: 20px; left: 15px; background: #70d3dc; }
.badge { position: absolute; left: 26px; top: 3px; width: 20px; height: 20px; border-radius: 50%; font: 13px/20px "Open Sans"; text-align: center; }
.teal { background: #66cdd4; color: #111; } .org { background: #f06a0a; }
.pcm { font: bold 11px "Liberation Sans"; fill: #fff; }
.tray { margin-left: auto; display: flex; align-items: center; font-size: 14px; line-height: 20px; letter-spacing: -.3px; padding-right: 25px; }
.lang { width: 60px; margin-left: 10px; text-align: center; padding-bottom: 1px; }
.ti { margin-left: 7px; }
.clock { width: 98px; text-align: right; font-size: 14.500px; letter-spacing: .15px; padding-bottom: 2px; }
.bell { margin-left: 11px; }
.zz { font: bold 9px "Liberation Sans"; fill: #222; } .zz.w { fill: #fff; }
```
